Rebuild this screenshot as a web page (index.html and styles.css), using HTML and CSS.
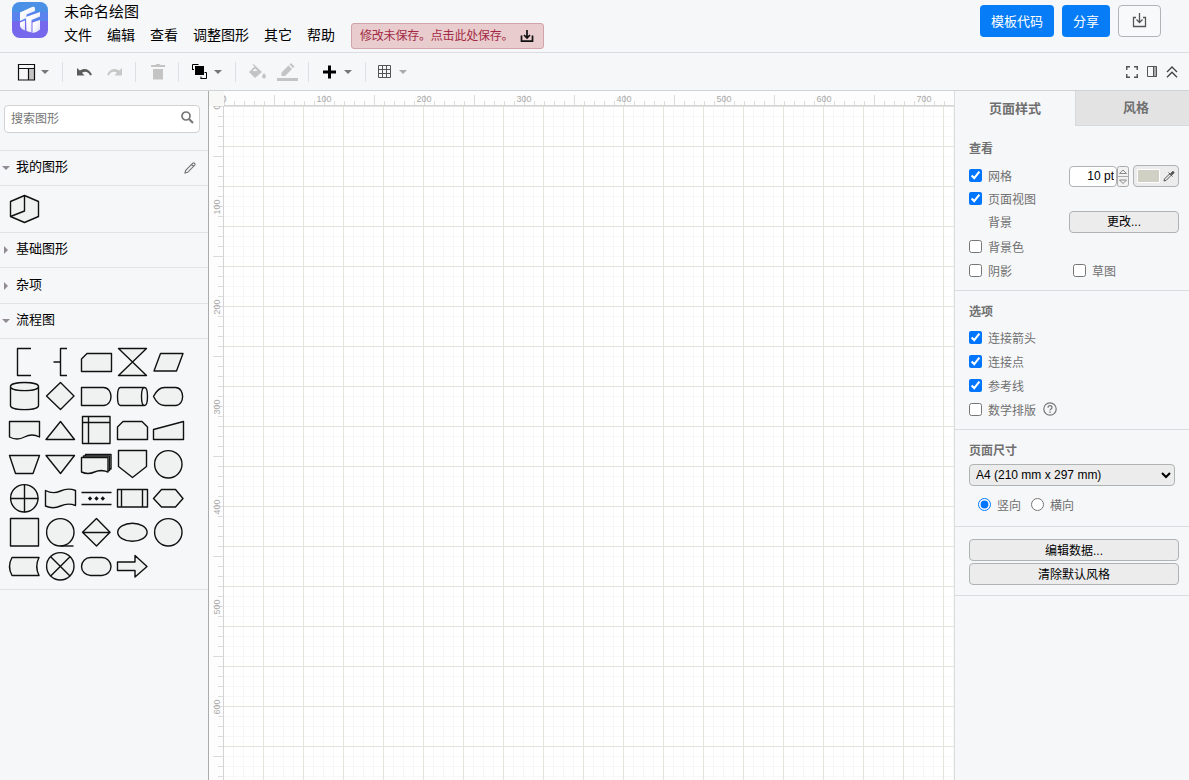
FILE: index.html
```
<!DOCTYPE html>
<html lang="zh-CN">

<head>
    <meta charset="UTF-8">
    <meta name="viewport" content="width=device-width, initial-scale=1.0">
    <title>未命名绘图</title>
    <link rel="stylesheet" href="styles.css">
</head>

<body>
    <header class="header">
        <svg class="logo" width="36" height="36" viewBox="0 0 36 36">
            <defs>
                <clipPath id="logo-clip"><rect width="36" height="36" rx="8"/></clipPath>
                <linearGradient id="logo-fade" x1="0" y1="0" x2="1" y2="1">
                    <stop offset="0.3" stop-color="#fff"/>
                    <stop offset="1" stop-color="#dcdcf8"/>
                </linearGradient>
            </defs>
            <g clip-path="url(#logo-clip)">
                <rect width="36" height="10" fill="#4a90e6"/>
                <rect y="10" width="36" height="9" fill="#5a83ee"/>
                <rect y="19" width="36" height="17" fill="#7568ec"/>
            </g>
            <g fill="url(#logo-fade)">
                <path d="M8 10.500L20 5q3-1 3 1.500V9l-8.500 3.500V16L8 19z"/>
                <path d="M8 20.500l5-2V28.500q-5-2-5-5.500z"/>
                <path d="M14 15l14-5v4.500L19.500 18v12.500L14.500 29z"/>
                <path d="M20.500 20.500L28 18v9.500q-3 3-7.500 3.500z"/>
            </g>
        </svg>
        <div class="head-main">
            <div class="doc-title">未命名绘图</div>
            <nav class="menu">
                <a>文件</a>
                <a>编辑</a>
                <a>查看</a>
                <a>调整图形</a>
                <a>其它</a>
                <a>帮助</a>
                <div class="notice">
                    <span>修改未保存。点击此处保存。</span>
                    <svg width="14" height="14" viewBox="0 0 14 14" fill="none" stroke="#111" stroke-width="1.700">
                        <path d="M1.500 6.500v5.700h11V6.500M7 1v8M4 6l3 3 3-3"/>
                    </svg>
                </div>
            </nav>
        </div>
        <div class="head-buttons">
            <button class="btn-blue">模板代码</button>
            <button class="btn-blue">分享</button>
            <button class="btn-save">
                <svg width="15" height="15" viewBox="0 0 15 15" fill="none" stroke="#555" stroke-width="1.300">
                    <path d="M4 4.500H1.500v9h12v-9H11M7.500 0v9M4.500 6.500l3 3 3-3"/>
                </svg>
            </button>
        </div>
    </header>

    <div class="toolbar">
        <div class="group g-view">
            <svg class="ico" viewBox="0 0 24 24">
                <rect x="13.500" y="8.500" width="6" height="11.500" fill="#c4c4c4"/>
                <path d="M3.500 4.500h16v15.500h-16zM3.500 8.500h16M13.500 8.500v11.500" fill="none" stroke="#111" stroke-width="1.200"/>
            </svg>
            <i class="arrow"></i>
        </div>
        <div class="group g-undo">
            <svg class="ico" viewBox="0 0 24 24" fill="#5c5c5c"><path d="M5 8v7.500h7.500l-2.500-2.700c3.500-2 6.500-.8 8 2.700l2-.7C17.500 8.500 12 7.500 7.800 10.500z"/></svg>
            <svg class="ico" viewBox="0 0 24 24" fill="#c8c8c8"><path d="M20 8v7.500h-7.500l2.500-2.700c-3.500-2-6.500-.8-8 2.700l-2-.7C7.500 8.500 13 7.500 17.200 10.500z"/></svg>
        </div>
        <div class="group g-trash">
            <svg class="ico" viewBox="0 0 24 24" fill="#c4c4c4"><path d="M5 5h4.500l1-1h3l1 1H19v2H5zM7 9h10v10.500H7z"/></svg>
        </div>
        <div class="group g-order">
            <svg class="ico" viewBox="0 0 24 24">
                <rect x="7" y="6" width="9" height="9"/>
                <path d="M4.500 10v-5.500h6M12.500 18.500h6v-6M4.500 9.500h1.500M13 16.500v2M16.500 12.500h2" fill="none" stroke="#000"/>
            </svg>
            <i class="arrow"></i>
        </div>
        <div class="group g-undo">
            <svg class="ico" viewBox="0 0 24 24" fill="#c4c4c4">
                <path fill-rule="evenodd" d="M8.500 4l8.500 8-7 6L4 12l5.500-5.500L7.500 4.500zM10 8.500l-2.500 2.500h5z"/>
                <path d="M19 13q2 2.500 2 3.500a2 2 0 0 1-4 0q0-1 2-3.500z"/>
            </svg>
            <svg class="ico" viewBox="0 0 24 24" fill="#c4c4c4"><path d="M6.500 16v-3.500l7-7 3.500 3.500-7 7zM14.500 4.500L16 3l3.500 3.500L18 8zM2 18h21v3H2z"/></svg>
        </div>
        <div class="group g-order">
            <svg class="ico" viewBox="0 0 24 24"><path d="M10 5.500h3v5h5v3h-5v5h-3v-5H5v-3h5z"/></svg>
            <i class="arrow"></i>
        </div>
        <div class="group g-table">
            <svg class="ico" viewBox="0 0 24 24" fill="none" stroke="#555"><path d="M5.500 5.500h12v12h-12zM5.500 9.500h12M5.500 13.500h12M9.500 5.500v12M13.500 5.500v12"/></svg>
            <i class="arrow light"></i>
        </div>
        <div class="tool-right">
            <svg width="12" height="12" viewBox="0 0 12 12" fill="none" stroke="#555" stroke-width="1.500"><path d="M.7 4V.7H4M8 .7h3.300V4M11.300 8v3.300H8M4 11.300H.7V8"/></svg>
            <svg width="10" height="11" viewBox="0 0 10 11"><rect x="6" width="4" height="11" fill="#aaa"/><path d="M.5.500h9v10h-9zM6.500.500v10" fill="none" stroke="#555"/></svg>
            <svg width="12" height="12" viewBox="0 0 12 12" fill="none" stroke="#444" stroke-width="1.400"><path d="M1 6l5-5 5 5M1 11.300l5-5 5 5"/></svg>
        </div>
    </div>

    <main class="main">
        <aside class="sidebar">
            <div class="search-wrap">
                <div class="search">
                    <span>搜索图形</span>
                    <svg width="13" height="13" viewBox="0 0 13 13" fill="none" stroke="#777"><circle cx="5" cy="5" r="4" stroke-width="1.700"/><path d="M8 8l4 4" stroke-width="2.200"/></svg>
                </div>
            </div>
            <div class="section-title open">
                <span>我的图形</span>
                <svg class="pencil" width="12" height="12" viewBox="0 0 12 12" fill="none" stroke="#777" stroke-width="1.200"><path d="M1 11l.7-2.700L8.800 1.200q1-.7 1.800.1t.1 1.800L3.700 10.300zM7.500 2.500l2 2"/></svg>
            </div>
            <div class="my-shapes">
                <svg class="shape" viewBox="-18 -17 36 34"><path d="M.5-13.500L14.500-7.500V7.500L.5 13.500-13.500 7.500V-7.500zM.5-13.500V2L-13.500 7.500"/></svg>
            </div>
            <div class="section-title"><span>基础图形</span></div>
            <div class="section-title tall"><span>杂项</span></div>
            <div class="section-title open"><span>流程图</span></div>
            <div class="shapes">
                <svg class="shape" viewBox="-18 -17 36 34"><path class="line" d="M7-13.500H-6.500v27H7"/></svg>
                <svg class="shape" viewBox="-18 -17 36 34"><path class="line" d="M7-13.500H.5v27H7M.5 0H-6.500"/></svg>
                <svg class="shape" viewBox="-18 -17 36 34"><path d="M-9-8.500H15.500v18H-14.500v-12.500z"/></svg>
                <svg class="shape" viewBox="-18 -17 36 34"><path d="M-13.500-13.500h28l-28 27h28z"/></svg>
                <svg class="shape" viewBox="-18 -17 36 34"><path d="M-7.500-8.500H15l-6.500 17.500h-22.500z"/></svg>

                <svg class="shape" viewBox="-18 -17 36 34"><path d="M-13.500-9.500V9.500c0 5.500 28 5.500 28 0v-19c0-5.300-28-5.300-28 0c0 5.500 28 5.500 28 0"/></svg>
                <svg class="shape" viewBox="-18 -17 36 34"><path d="M.5-13.500l13.500 13.500-13.500 13.500L-13.500 0z"/></svg>
                <svg class="shape" viewBox="-18 -17 36 34"><path d="M-14.500-8.500H7.500c10 0 10 18 0 18h-22z"/></svg>
                <svg class="shape" viewBox="-18 -17 36 34"><path d="M-11.500-8.500H12.500c4 0 4 18 0 18h-24c-4 0-4-18 0-18zM12.500-8.500c-4 0-4 18 0 18"/></svg>
                <svg class="shape" viewBox="-18 -17 36 34"><path d="M-14.500.5q4.500-9 11-9h11c9.500 0 9.500 18 0 18h-11q-6.500 0-11-9z"/></svg>

                <svg class="shape" viewBox="-18 -17 36 34"><path d="M-14.500-8.500h30v15.500q-7.500-4-15 0t-15 0z"/></svg>
                <svg class="shape" viewBox="-18 -17 36 34"><path d="M.5-8.500l14 18h-28.500z"/></svg>
                <svg class="shape" viewBox="-18 -17 36 34"><path d="M-13.500-13.500h27.500v27h-27.500zM-13.500-7.500h27.500M-7.500-13.500v27"/></svg>
                <svg class="shape" viewBox="-18 -17 36 34"><path d="M-9-8.500h19l5.500 5.500v12.500h-30v-12.500z"/></svg>
                <svg class="shape" viewBox="-18 -17 36 34"><path d="M-14.500-.5l30-8v18h-30z"/></svg>

                <svg class="shape" viewBox="-18 -17 36 34"><path d="M-14.500-8.500h30l-6.500 18h-17.500z"/></svg>
                <svg class="shape" viewBox="-18 -17 36 34"><path d="M-14-8.500h28.500l-14 18z"/></svg>
                <svg class="shape" viewBox="-18 -17 36 34"><path d="M-10.500-9.500h25.500v14.500h-25.500z"/><path d="M-12.500-8h26v14.500h-26z"/><path d="M-14.500-6.500h26.500v14.500q-7-3-13.500 0t-13 0z"/></svg>
                <svg class="shape" viewBox="-18 -17 36 34"><path d="M-13.500-13.500h28v16l-14 11-14-11z"/></svg>
                <svg class="shape" viewBox="-18 -17 36 34"><circle cx=".3" cy=".3" r="13.700"/></svg>

                <svg class="shape" viewBox="-18 -17 36 34"><circle cx=".3" cy=".3" r="13.700"/><path d="M-13.500.5h28M.5-13.500v28"/></svg>
                <svg class="shape" viewBox="-18 -17 36 34"><path d="M-14.500-7.500q7.500 4 15 .5t15-.5v15q-7.500-3-15 .5t-15 0z"/></svg>
                <svg class="shape" viewBox="-18 -17 36 34"><path d="M-14.500-5.500h30M-14.500 6.500h30"/><path class="dots" d="M-6-1.700l2.200 2.200-2.200 2.200-2.200-2.200zM.5-1.700l2.200 2.200-2.200 2.200-2.200-2.200zM6.800-1.700l2.200 2.200-2.200 2.200-2.200-2.200z"/></svg>
                <svg class="shape" viewBox="-18 -17 36 34"><path d="M-14.500-8.500h30v17.500h-30zM-10.500-8.500v17.500M10.500-8.500v17.500"/></svg>
                <svg class="shape" viewBox="-18 -17 36 34"><path d="M-14.500.5l8-9H7.500l7.500 9-7.500 8.500H-6.500z"/></svg>

                <svg class="shape" viewBox="-18 -17 36 34"><path d="M-13.500-13.500h28v27.500h-28z"/></svg>
                <svg class="shape" viewBox="-18 -17 36 34"><circle cx=".3" cy=".3" r="13.700"/><path d="M.5 14h13"/></svg>
                <svg class="shape" viewBox="-18 -17 36 34"><path d="M.5-13.500L14 .3.500 14-13.500.3zM-13.500.5h28"/></svg>
                <svg class="shape" viewBox="-18 -17 36 34"><ellipse cx=".4" cy=".3" rx="14.700" ry="9"/></svg>
                <svg class="shape" viewBox="-18 -17 36 34"><circle cx=".3" cy=".3" r="13.700"/></svg>

                <svg class="shape" viewBox="-18 -17 36 34"><path d="M-12-8.500H15q-4.500 9 0 18h-27q-5-9 0-18z"/></svg>
                <svg class="shape" viewBox="-18 -17 36 34"><circle cx=".3" cy=".3" r="13.700"/><path d="M-9.300-9.300L10 10M10-9.300L-9.300 10"/></svg>
                <svg class="shape" viewBox="-18 -17 36 34"><rect x="-14.500" y="-8.500" width="29.500" height="18" rx="9"/></svg>
                <svg class="shape" viewBox="-18 -17 36 34"><path d="M-14.500-4h17.500v-6.500L15 .5 3 11V4.500h-17.500z"/></svg>
            </div>
        </aside>

        <div class="canvas">
            <div class="corner"></div>
            <svg class="ruler-h" width="730" height="14">
                <defs>
                    <pattern id="ticks-h" x="0" y="0" width="50" height="14" patternUnits="userSpaceOnUse">
                        <path d="M.5 4v10M10.500 10v4M20.500 10v4M30.500 10v4M40.500 10v4" stroke="#dcdcdc"/>
                    </pattern>
                </defs>
                <rect width="730" height="14" fill="url(#ticks-h)"/>
                <g class="nums" id="nums-h"></g>
            </svg>
            <svg class="ruler-v" width="14" height="674">
                <defs>
                    <pattern id="ticks-v" x="0" y="0" width="14" height="50" patternUnits="userSpaceOnUse">
                        <path d="M4 .5h10M9 10.500h5M9 20.500h5M9 30.500h5M9 40.500h5" stroke="#dcdcdc"/>
                    </pattern>
                </defs>
                <rect width="14" height="674" fill="url(#ticks-v)"/>
                <g class="nums" id="nums-v"></g>
            </svg>
            <div class="page"></div>
        </div>

        <aside class="panel">
            <div class="tabs">
                <div class="tab">页面样式</div>
                <div class="tab off">风格</div>
            </div>
            <div class="block view">
                <h3>查看</h3>
                <div class="row h24">
                    <label><input type="checkbox" checked>网格</label>
                    <div class="grid-size">
                        <input class="size" type="text" value="10 pt">
                        <svg width="12" height="21" viewBox="0 0 12 21" fill="#f2f2f2" stroke="#aaa">
                            <rect x=".5" y=".5" width="11" height="20" rx="2"/>
                            <path d="M.5 10.500h11"/>
                            <path d="M2.500 7.500l3.500-3.500 3.500 3.500zM2.500 14l3.500 3.500 3.500-3.500z" stroke="#888"/>
                        </svg>
                        <button class="color">
                            <i></i>
                            <svg width="12" height="12" viewBox="0 0 12 12" fill="none" stroke="#555"><path d="M1 11l.5-2 5-5 1.500 1.500-5 5zM5.500 2.500l4 4"/><path d="M7.500 4l1.500-2q1-1 1.700-.2t-.2 1.700l-2 1.500z" fill="#555"/></svg>
                        </button>
                    </div>
                </div>
                <div class="row h22"><label><input type="checkbox" checked>页面视图</label></div>
                <div class="row h25"><span class="indent">背景</span><button class="btn change">更改...</button></div>
                <div class="row h25"><label><input type="checkbox">背景色</label></div>
                <div class="row h22"><label class="half"><input type="checkbox">阴影</label><label><input type="checkbox">草图</label></div>
            </div>
            <div class="block options">
                <h3>选项</h3>
                <div class="row h24"><label><input type="checkbox" checked>连接箭头</label></div>
                <div class="row h24"><label><input type="checkbox" checked>连接点</label></div>
                <div class="row h24"><label><input type="checkbox" checked>参考线</label></div>
                <div class="row h24">
                    <label><input type="checkbox">数学排版</label>
                    <svg class="help" width="14" height="14" viewBox="0 0 14 14" fill="none" stroke="#777" stroke-width="1.200"><circle cx="7" cy="7" r="6.200"/><path d="M5 5.700q0-2 2-2t2 1.800q0 1-1 1.600t-1 1.500M7 9.500v1.500"/></svg>
                </div>
            </div>
            <div class="block paper">
                <h3>页面尺寸</h3>
                <select>
                    <option>A4 (210 mm x 297 mm)</option>
                </select>
                <div class="row radios">
                    <label><input type="radio" name="dir" checked>竖向</label>
                    <label><input type="radio" name="dir">横向</label>
                </div>
            </div>
            <div class="block actions">
                <button class="btn">编辑数据...</button>
                <button class="btn">清除默认风格</button>
            </div>
        </aside>
    </main>

    <script>
        // ruler numbers
        var h = '', v = '';
        for (var i = 0; i <= 7; i++) {
            h += `<text x="${i * 100}" y="11">${i * 100}</text>`;
            if (i < 7) {
                v += `<text transform="translate(11 ${i * 100 + 1}) rotate(-90)">${i * 100}</text>`;
            }
        }
        document.getElementById('nums-h').innerHTML = h;
        document.getElementById('nums-v').innerHTML = v;
    </script>
</body>

</html>
```
FILE: styles.css
```
* {
    box-sizing: border-box;
}
body {
    margin: 0;
    height: 780px;
    display: flex;
    flex-direction: column;
    overflow: hidden;
    background: #f6f7f9;
    color: #000;
    font-family: "Liberation Sans", "Noto Sans CJK SC", sans-serif;
    font-size: 12px;
}
svg {
    display: block;
    flex: none;
}
button, input, select {
    font-family: inherit;
    margin: 0;
}

/* header */
.header {
    height: 53px;
    display: flex;
    border-bottom: 1px solid #dadce0;
    padding-left: 12px;
}
.logo {
    margin-top: 2px;
}
.head-main {
    margin-left: 16px;
    flex: 1;
}
.doc-title {
    font-size: 15px;
    line-height: 23px;
    height: 22px;
}
.menu {
    display: flex;
    align-items: center;
    gap: 15px;
    height: 28px;
    font-size: 14px;
    line-height: 24px;
}
.menu a {
    height: 26px;
}
.notice {
    display: flex;
    align-items: center;
    width: 193px;
    height: 26px;
    border: 1px solid #d0a4a9;
    border-radius: 3px;
    background: #e9cccd;
    color: #a32a45;
    font-size: 12px;
    padding-left: 8px;
    margin-left: 1px;
}
.notice svg {
    margin-left: 5px;
}
.notice span {
    width: 155px;
    letter-spacing: -0.2px;
    white-space: nowrap;
}
.head-buttons {
    display: flex;
    gap: 8px;
    padding: 5px 28px 0 0;
}
.head-buttons button {
    height: 32px;
    border-radius: 4px;
    padding: 0 0 1px;
}
.btn-blue {
    width: 74px;
    border: none;
    background: #067df7;
    color: #fff;
    font-size: 13px;
}
.btn-blue + .btn-blue {
    width: 48px;
}
.head-buttons .btn-save {
    width: 43px;
    background: #f8f9fa;
    border: 1px solid #b0b3b8;
    display: flex;
    align-items: center;
    justify-content: center;
}

/* toolbar */
.toolbar {
    height: 38px;
    display: flex;
    align-items: center;
    border-bottom: 1px solid #d0d2d4;
}
.group {
    display: flex;
    align-items: center;
    height: 20px;
    width: 57px;
    padding-left: 9px;
    border-right: 1px solid #dfe0e3;
}
.ico {
    width: 24px;
    height: 24px;
}
.g-view {
    width: 63px;
    padding-left: 15px;
}
.g-undo {
    width: 73px;
    gap: 6px;
}
.g-trash {
    width: 43px;
    padding-left: 10px;
}
.g-table {
    border: none;
    padding-left: 7px;
}
.arrow {
    border: 4px solid transparent;
    border-top-color: #777;
    border-bottom: none;
    margin: 0 2px;
}
.arrow.light {
    border-top-color: #aaa;
}
.tool-right {
    display: flex;
    align-items: center;
    gap: 9px;
    margin-left: auto;
    padding-right: 11px;
}

/* sidebar */
.main {
    flex: 1;
    display: flex;
    min-height: 0;
}
.sidebar {
    flex: none;
    width: 209px;
    border-right: 1px solid #a9abac;
}
.search-wrap {
    height: 60px;
    padding: 14px 8px 0 4px;
    border-bottom: 1px solid #e2e3e5;
}
.search {
    display: flex;
    align-items: center;
    justify-content: space-between;
    height: 28px;
    background: #fff;
    border: 1px solid #d2d2d2;
    border-radius: 4px;
    padding: 0 5px 3px 6px;
    color: #757575;
}
.section-title {
    display: flex;
    align-items: center;
    height: 35px;
    font-size: 13px;
    border-bottom: 1px solid #e2e3e5;
}
.section-title span {
    margin-top: -5px;
}
.section-title.tall {
    height: 36px;
}
.section-title::before {
    content: "";
    border: 4px solid transparent;
    border-left-color: #918b93;
    border-right: none;
    margin: 0 8px 0 4px;
}
.section-title.open::before {
    border: 4px solid transparent;
    border-top-color: #918b93;
    border-bottom: none;
    margin: 0 6px 0 2px;
}
.pencil {
    margin-left: auto;
    margin-right: 12px;
}
.my-shapes {
    height: 47px;
    padding: 6px;
    border-bottom: 1px solid #e2e3e5;
}
.shapes {
    display: grid;
    grid-template-columns: repeat(5, 36px);
    padding: 6px;
    border-bottom: 1px solid #e2e3e5;
}
.shape {
    width: 36px;
    height: 34px;
    fill: #f0f2f2;
    stroke: #111;
    stroke-width: 1.4;
    stroke-linejoin: round;
}
.shape .line {
    fill: none;
}
.shape .dots {
    fill: #111;
    stroke: none;
}

/* canvas */
.canvas {
    flex: none;
    width: 745px;
    display: grid;
    grid-template-columns: 15px 730px;
    grid-template-rows: 15px 1fr;
    overflow: hidden;
}
.corner {
    background: #f8f8f7;
}
.ruler-h, .ruler-v {
    box-sizing: content-box;
    background: #fdfdfd;
}
.ruler-h {
    border-bottom: 1px solid #d4d4d8;
}
.ruler-v {
    border-right: 1px solid #d4d4d8;
}
.nums {
    fill: #aaa;
    font-size: 9px;
    text-anchor: middle;
}
.page {
    margin-left: -1px;
    background-color: #fff;
    background-image:
        linear-gradient(90deg, #e5e4dc 1px, transparent 1px),
        linear-gradient(#e5e4dc 1px, transparent 1px),
        linear-gradient(90deg, #f7f7f5 1px, transparent 1px),
        linear-gradient(#f7f7f5 1px, transparent 1px);
    background-size: 40px 40px, 40px 40px, 10px 10px, 10px 10px;
    border-left: 1px solid #d4d4d8;
    background-origin: border-box;
}

/* format panel */
.panel {
    flex: none;
    width: 235px;
    border-left: 1px solid #dadce0;
    color: #707070;
}
.tabs {
    display: flex;
    height: 35px;
    font-size: 13px;
    font-weight: bold;
    line-height: 36px;
    text-align: center;
}
.tab {
    width: 120px;
}
.tab.off {
    flex: 1;
    padding-left: 7px;
    line-height: 34px;
    background: #e3e3e4;
    border-left: 1px solid #d8d9dc;
    border-bottom: 1px solid #d8d9dc;
}
.block {
    padding: 11px 10px 8px 14px;
    border-bottom: 1px solid #dadce0;
}
.block h3 {
    margin: 0 0 3px;
    font-size: 12px;
    font-weight: bold;
    line-height: 20px;
}
.view {
    padding-top: 13px;
    padding-bottom: 9px;
}
.view h3 {
    margin-bottom: 4px;
}
.row {
    display: flex;
    align-items: center;
}
.h22 {
    height: 22px;
}
.h24 {
    height: 24px;
}
.h25 {
    height: 25px;
}
.row label {
    display: flex;
    align-items: center;
    gap: 6px;
}
.row .half {
    width: 104px;
}
input[type=checkbox], input[type=radio] {
    width: 13px;
    height: 13px;
}
.grid-size {
    display: flex;
    align-items: center;
    margin-left: auto;
    margin-top: 2px;
}
.size {
    width: 48px;
    height: 21px;
    border: 1px solid #b0b3b3;
    border-radius: 4px;
    padding: 0 2px;
    font-size: 12px;
    text-align: right;
}
.color {
    display: flex;
    align-items: center;
    justify-content: space-between;
    width: 46px;
    height: 22px;
    margin-left: 4px;
    padding: 0 3px;
    border: 1px solid #b0b3b3;
    border-radius: 4px;
    background: #ececec;
}
.color i {
    width: 23px;
    height: 14px;
    background: #d0d0c5;
    border: 1px solid #fff;
}
.btn {
    display: block;
    width: 210px;
    height: 22px;
    padding: 0 0 2px;
    border: 1px solid #b0b3b3;
    border-radius: 4px;
    background: #ececec;
    color: #000;
    font-size: 12px;
}
.change {
    width: 110px;
    margin-left: auto;
}
.indent {
    margin-left: 19px;
}
.help {
    margin-left: 7px;
}
.paper {
    height: 97px;
}
.paper select {
    display: block;
    width: 206px;
    height: 22px;
    border: 1px solid #b0b3b3;
    border-radius: 4px;
    background: #ececec;
    padding-left: 2px;
    font-size: 12px;
}
.radios {
    height: 24px;
    margin: 6px 0 0 9px;
    gap: 10px;
}
.actions {
    display: flex;
    flex-direction: column;
    gap: 2px;
    padding: 12px 10px 10px 14px;
}
```
